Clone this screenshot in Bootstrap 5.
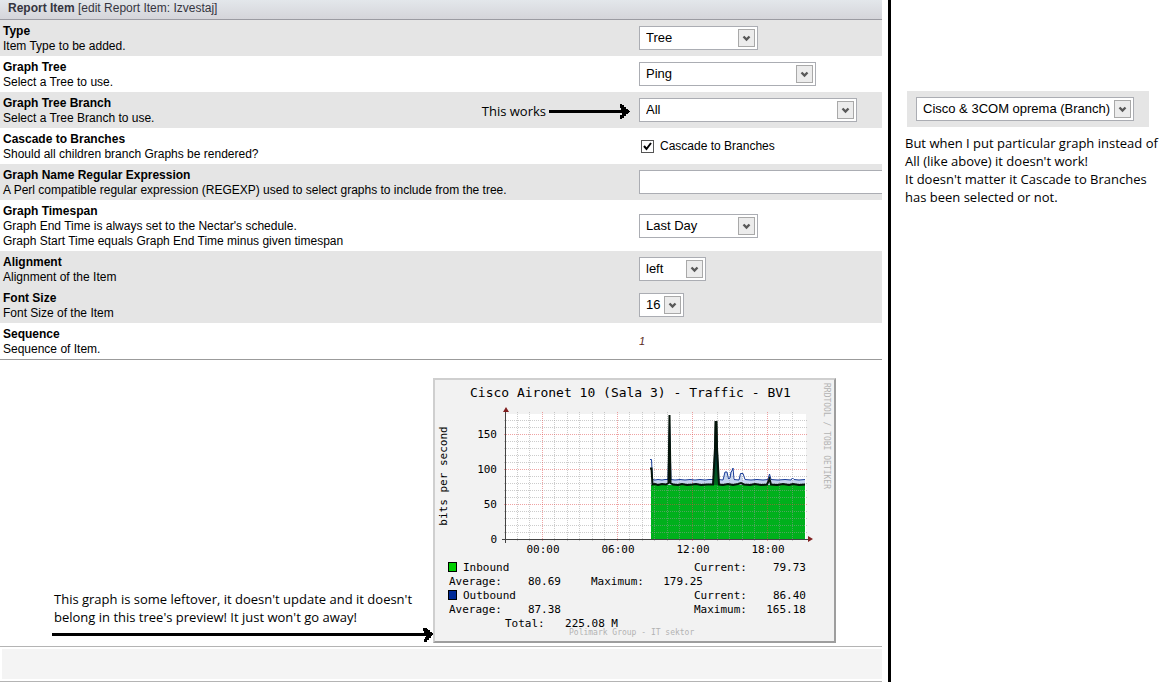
<!DOCTYPE html>
<html lang="en">
<head>
<meta charset="utf-8">
<meta name="viewport" content="width=device-width, initial-scale=1">
<title>Report Item</title>
<link href="https://cdn.jsdelivr.net/npm/bootstrap@5.3.0/dist/css/bootstrap.min.css" rel="stylesheet">
<style>
  body { font-family: "Liberation Sans", Arial, sans-serif; font-size: 12px; line-height: 15px; color: #000; background: #fff; }
  .page-grid { display: grid; grid-template-columns: minmax(0, 1fr) 277px; min-height: 100vh; }
  .side-notes { border-left: 3px solid #000; padding: 91px 0 0 14px; }
  .main-pane { padding-right: 6px; overflow: hidden; }
  .item-head { height: 20px; padding: 0 8px; font-size: 12px; line-height: 16px; color: #35353f; border-bottom: 1px solid #9b9ba2; background: linear-gradient(#e3e7eb, #d5d5da); }
  .item-row { display: grid; grid-template-columns: minmax(0, 1fr) 243px; }
  .item-row.shade { background: #e5e5e5; }
  .item-row > .about { padding: 4px 0 2px 3px; }
  .item-row > .field { display: flex; align-items: center; overflow: hidden; }
  .pick { height: 24px; padding: 0 20px 0 6px; border: 1px solid #abadb3; border-radius: 0; font-family: inherit; font-size: 13px; line-height: 22px; color: #000;
    background: #fff url("data:image/svg+xml,%3Csvg xmlns='http://www.w3.org/2000/svg' width='17' height='18'%3E%3Crect x='.5' y='.5' width='16' height='17' fill='%23ececec' stroke='%23a9a9a9'/%3E%3Cpath d='M5.5 7.5l3 3 3-3' fill='none' stroke='%23595959' stroke-width='2.4'/%3E%3C/svg%3E") no-repeat right 2px center; }
  .item-form { border-bottom: 1px solid #9b9b9b; }
  .w-a { width: 119px; } .w-b { width: 177px; } .w-c { width: 218px; } .w-d { width: 67px; } .w-e { width: 45px; }
  .regex-box { flex: 0 0 260px; height: 24px; border: 1px solid #abadb3; border-radius: 0; font-size: 13px; }
  .tick { width: 13px; height: 13px; margin: 0 6px 0 2px; border: 1px solid #555; border-radius: 0; background: #fff; appearance: none; }
  .tick:checked { background: #fff url("data:image/svg+xml,%3Csvg xmlns='http://www.w3.org/2000/svg' width='11' height='11'%3E%3Cpath d='M2 5l2.5 3L9 2' fill='none' stroke='%23000' stroke-width='2'/%3E%3C/svg%3E") no-repeat center; }
  .seq { font-size: 11px; color: #5a2a1c; }
  .remark { font-family: "Open Sans", "Noto Sans", sans-serif; font-size: 13px; line-height: 18px; }
  .shaft { height: 3px; background: #000; }
  .arrow-short { width: 81px; margin: 0 9px 0 3px; }
  .head-tip { width: 11px; height: 15px; flex: none; margin-left: -6px; }
  .preview { padding: 18px 46px 3px 52px; border-bottom: 1px solid #b4b4b4; }
  .preview .remark { padding: 0 2px; }
  .arrow-long { height: 15px; margin: 1px 0; }
  .traffic { width: 403px; height: 265px; flex: none; background: #f2f2f2; border: 2px solid; border-color: #cfcfcf #9e9e9e #9e9e9e #cfcfcf; }
  .traffic text { font-family: "DejaVu Sans Mono", monospace; font-size: 11px; fill: #000; }
  .traffic .t-title { font-size: 13px; }
  .traffic .t-faint { font-size: 8px; fill: #b2b2b2; }
  .foot-wrap { padding: 2px 0 2px 2px; border-bottom: 1px solid #b4b4b4; }
  .foot-bar { height: 30px; background: #f4f4f4; }
  .branch-box { width: 242px; padding: 6px 9px; background: #e5e5e5; margin: 0 0 7px 2px; }
  .side-text { margin-right: -4px; }
</style>
</head>
<body>
<div class="page-grid">
  <main class="main-pane">
    <header class="item-head"><strong>Report Item</strong> [edit Report Item: Izvestaj]</header>
    <form class="item-form">
      <div class="item-row shade">
        <div class="about"><label class="fw-bold d-block" for="f-type">Type</label>Item Type to be added.</div>
        <div class="field"><select class="pick w-a form-select" id="f-type"><option>Tree</option></select></div>
      </div>
      <div class="item-row">
        <div class="about"><label class="fw-bold d-block" for="f-tree">Graph Tree</label>Select a Tree to use.</div>
        <div class="field"><select class="pick w-b form-select" id="f-tree"><option>Ping</option></select></div>
      </div>
      <div class="item-row shade">
        <div class="about d-flex">
          <div class="flex-grow-1"><label class="fw-bold d-block" for="f-branch">Graph Tree Branch</label>Select a Tree Branch to use.</div>
          <div class="d-flex align-items-center">
            <span class="remark">This works</span>
            <span class="arrow-short d-flex align-items-center"><span class="shaft flex-grow-1"></span><svg class="head-tip" viewBox="0 0 11 15"><path d="M1 0h2v1h2v2h2v2h2v1h1v1h1v1h-1v1h-1v1h-2v2h-2v2h-2v1h-2v-4h2v-2h1v-3h-2v-2h-1z"/></svg></span>
          </div>
        </div>
        <div class="field"><select class="pick w-c form-select" id="f-branch"><option>All</option></select></div>
      </div>
      <div class="item-row">
        <div class="about"><strong class="d-block">Cascade to Branches</strong>Should all children branch Graphs be rendered?</div>
        <div class="field"><input class="tick" type="checkbox" id="f-cascade" checked><label for="f-cascade">Cascade to Branches</label></div>
      </div>
      <div class="item-row shade">
        <div class="about"><label class="fw-bold d-block" for="f-regex">Graph Name Regular Expression</label>A Perl compatible regular expression (REGEXP) used to select graphs to include from the tree.</div>
        <div class="field"><input class="regex-box" type="text" id="f-regex"></div>
      </div>
      <div class="item-row">
        <div class="about"><label class="fw-bold d-block" for="f-span">Graph Timespan</label>Graph End Time is always set to the Nectar's schedule.<br>Graph Start Time equals Graph End Time minus given timespan</div>
        <div class="field"><select class="pick w-a form-select" id="f-span"><option>Last Day</option></select></div>
      </div>
      <div class="item-row shade">
        <div class="about"><label class="fw-bold d-block" for="f-align">Alignment</label>Alignment of the Item</div>
        <div class="field"><select class="pick w-d form-select" id="f-align"><option>left</option></select></div>
      </div>
      <div class="item-row shade">
        <div class="about"><label class="fw-bold d-block" for="f-size">Font Size</label>Font Size of the Item</div>
        <div class="field"><select class="pick w-e form-select" id="f-size"><option>16</option></select></div>
      </div>
      <div class="item-row">
        <div class="about"><strong class="d-block">Sequence</strong>Sequence of Item.</div>
        <div class="field"><em class="seq">1</em></div>
      </div>
    </form>

    <section class="preview d-flex">
      <div class="flex-grow-1 align-self-end">
        <div class="remark">This graph is some leftover, it doesn't update and it doesn't<br>belong in this tree's preview! It just won't go away!</div>
        <div class="arrow-long d-flex align-items-center"><span class="shaft flex-grow-1"></span><svg class="head-tip" viewBox="0 0 11 15"><path d="M1 1h4v1h1v1h2v2h2v1h1v2h-1v1h-1v2h-2v2h-2v2h-3v-3h1v-2h1v-4h-2v-2h-1z"/></svg></div>
      </div>
      <svg class="traffic" viewBox="2 2 399 261" role="img" aria-label="Cisco Aironet 10 traffic graph">
        <defs>
          <linearGradient id="spike" x1="0" y1="0" x2="0" y2="1"><stop offset="0" stop-color="#04300c"/><stop offset=".45" stop-color="#041c3c"/><stop offset="1" stop-color="#00701c"/></linearGradient>
        </defs>
        <text class="t-title" x="37" y="19">Cisco Aironet 10 (Sala 3) - Traffic - BV1</text>
        <rect x="73" y="36" width="300" height="125" fill="#fff"/>
        <path d="M218 102H372V108H218zM290 102L292 94H294L295 102zM296 102L298 93L299 90L300 102zM306 102L308 95L310 102z" fill="#c4d4ee"/>
        <path d="M218 107H372V161H218z" fill="#00b01c"/>
        <g fill="none" stroke="#999" stroke-opacity=".5" stroke-dasharray="1 1">
          <path d="M71 154.500h304M71 147.500h304M71 140.500h304M71 133.500h304M71 119.500h304M71 112.500h304M71 105.500h304M71 98.500h304M71 84.500h304M71 77.500h304M71 70.500h304M71 63.500h304M71 49.500h304M71 42.500h304"/>
          <path d="M84.500 34v129M96.500 34v129M121.500 34v129M134.500 34v129M146.500 34v129M159.500 34v129M171.500 34v129M196.500 34v129M209.500 34v129M221.500 34v129M234.500 34v129M246.500 34v129M271.500 34v129M284.500 34v129M296.500 34v129M309.500 34v129M321.500 34v129M346.500 34v129M359.500 34v129"/>
        </g>
        <path d="M71 126.500h304M71 91.500h304M71 56.500h304M109.500 34v130M184.500 34v130M259.500 34v130M334.500 34v130" fill="none" stroke="#e04848" stroke-opacity=".5" stroke-dasharray="1 1"/>
        <path d="M217 81.500H218.500L219.500 101.500L222 102L225 101.500L229 102L232 101.500H235L236.500 45L238 101.500L242 102L247 101.500L252 102L257 101.500L262 102L267 101.500L272 102L276 101.500H281L283 55L285.500 101.500L290 102L292 94H294L295.500 101L297 100L298 94L299 93L300 90L301 101.500L306 102L307.500 95.500H310L312 101.500L318 102L324 101.500L330 102L335 101.500L336.500 96L338 101.500L345 102L352 101.500L358 102L359.500 100L361 101.500L366 102L372 101.500" fill="none" stroke="#183c98"/>
        <path d="M280 107L282 43H284L286 107z" fill="url(#spike)"/>
        <path d="M217 90.500H218.500L219.500 106.500L222 106L225 107L229 106L233 106.500L235.500 105L236.500 37L237.500 105L240 106.500L245 107L249 106L254 107L259 106.500L263 106L268 107L274 106.500L280 106.500L282 70L282.500 44H283.500L284 70L286 106.500L290 107L295 106L300 107L305 106L308 105L311 106.500L317 107L322 106L328 107L334 106.500L336.500 101L338 106.500L344 107L350 106L356 107L360 106L366 107L372 106.500" fill="none" stroke="#04140a" stroke-width="2"/>
        <path d="M72.500 165V34M69 161.500h307" fill="none" stroke="#444"/>
        <path d="M70 34l3-5 3 5zM375 158l5 3-5 3z" fill="#802020"/>
        <g text-anchor="end"><text x="64" y="60">150</text><text x="64" y="95">100</text><text x="64" y="130">50</text><text x="64" y="165">0</text></g>
        <g text-anchor="middle"><text x="110" y="175">00:00</text><text x="185" y="175">06:00</text><text x="260" y="175">12:00</text><text x="335" y="175">18:00</text></g>
        <text text-anchor="middle" transform="translate(14 98) rotate(-90)">bits per second</text>
        <text class="t-faint" transform="translate(391 5) rotate(90)">RRDTOOL / TOBI OETIKER</text>
        <g stroke="#000"><rect x="15.500" y="184.500" width="8" height="9" fill="#00cf00"/><rect x="15.500" y="212.500" width="8" height="9" fill="#002a97"/></g>
        <text x="30" y="193">Inbound</text><text x="16" y="207">Average:</text>
        <text x="30" y="221">Outbound</text><text x="16" y="235">Average:</text>
        <text x="158" y="207">Maximum:</text><text x="72" y="249">Total:</text>
        <text x="261" y="193">Current:</text><text x="261" y="221">Current:</text><text x="261" y="235">Maximum:</text>
        <g text-anchor="end"><text x="128" y="207">80.69</text><text x="128" y="235">87.38</text><text x="270" y="207">179.25</text><text x="185" y="249">225.08 M</text><text x="373" y="193">79.73</text><text x="373" y="221">86.40</text><text x="373" y="235">165.18</text></g>
        <text class="t-faint" x="136" y="257">Polimark Group - IT sektor</text>
      </svg>
    </section>
    <div class="foot-wrap"><div class="foot-bar"></div></div>
  </main>

  <aside class="side-notes">
    <div class="branch-box"><select class="pick w-c form-select" aria-label="Graph Tree Branch"><option>Cisco &amp; 3COM oprema (Branch)</option></select></div>
    <div class="remark side-text">But when I put particular graph instead of<br>All (like above) it doesn't work!<br>It doesn't matter it Cascade to Branches<br>has been selected or not.</div>
  </aside>
</div>
<script src="https://cdn.jsdelivr.net/npm/bootstrap@5.3.0/dist/js/bootstrap.bundle.min.js"></script>
</body>
</html>
